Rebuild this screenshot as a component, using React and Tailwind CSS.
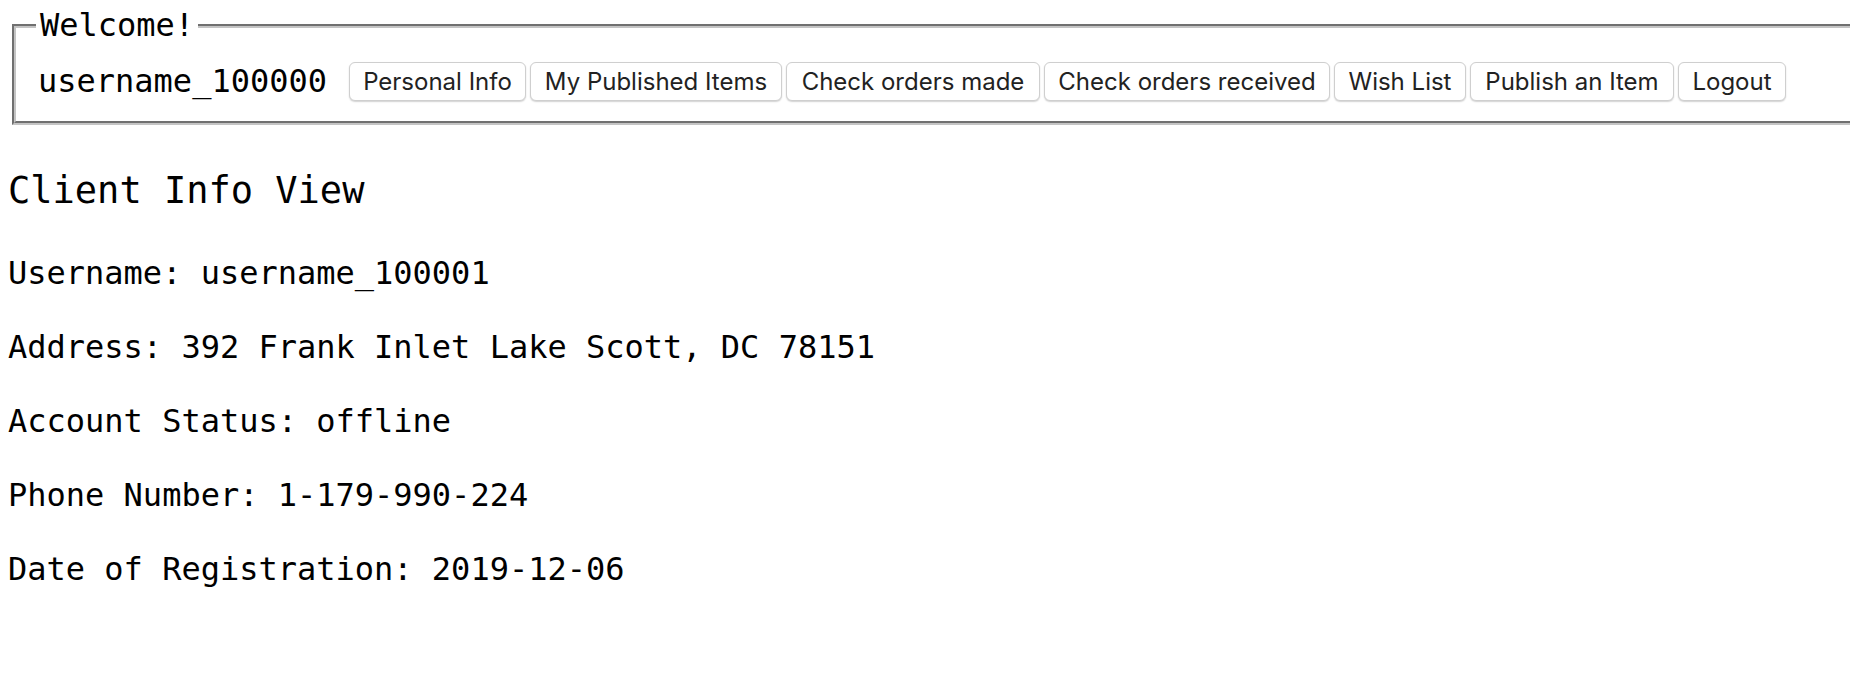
const mono = { fontFamily: '"DejaVu Sans Mono", "Liberation Mono", monospace' };

const buttons = [
  { label: "Personal Info", w: "w-[177px]" },
  { label: "My Published Items", w: "w-[252px]" },
  { label: "Check orders made", w: "w-[254px]" },
  { label: "Check orders received", w: "w-[286px]" },
  { label: "Wish List", w: "w-[132px]" },
  { label: "Publish an Item", w: "w-[204px]" },
  { label: "Logout", w: "w-[108px]" },
];

const info = [
  ["Username", "username_100001"],
  ["Address", "392 Frank Inlet Lake Scott, DC 78151"],
  ["Account Status", "offline"],
  ["Phone Number", "1-179-990-224"],
  ["Date of Registration", "2019-12-06"],
];

export default function App() {
  return (
    <div
      className="min-h-screen w-full overflow-hidden bg-white pl-[8px] text-black font-['DejaVu_Sans_Mono',monospace]"
    >
      <fieldset className="ml-[4px] mt-[7px] w-[1900px] border-[4px] [border-style:groove] border-[#c4c4c4] pl-[20px] pt-[18px] pb-[20px]">
        <legend className="px-[4px] text-[32px] leading-[37px]">Welcome!</legend>
        <div className="flex items-center">
          <span className="ml-[2px] mr-[22px] text-[32px] leading-[37px]">username_100000</span>
          <div className="flex gap-[4px]">
            {buttons.map((b) => (
              <button
                key={b.label}
                className={`${b.w} h-[39px] rounded-[6px] border border-[#cfcfcf] bg-white text-center text-[24px] leading-none text-[#222] shadow-[0_1px_1.5px_rgba(0,0,0,0.18)] font-['Inter',sans-serif] whitespace-nowrap`}
              >
                {b.label}
              </button>
            ))}
          </div>
        </div>
      </fieldset>

      <h2 className="mt-[44px] text-[37px] leading-[43px] font-normal" style={mono}>
        Client Info View
      </h2>

      <div className="mt-[42px] flex flex-col gap-[36px]">
        {info.map(([k, v]) => (
          <p key={k} className="text-[32px] leading-[38px] whitespace-pre">
            {k}: {v}
          </p>
        ))}
      </div>
    </div>
  );
}
